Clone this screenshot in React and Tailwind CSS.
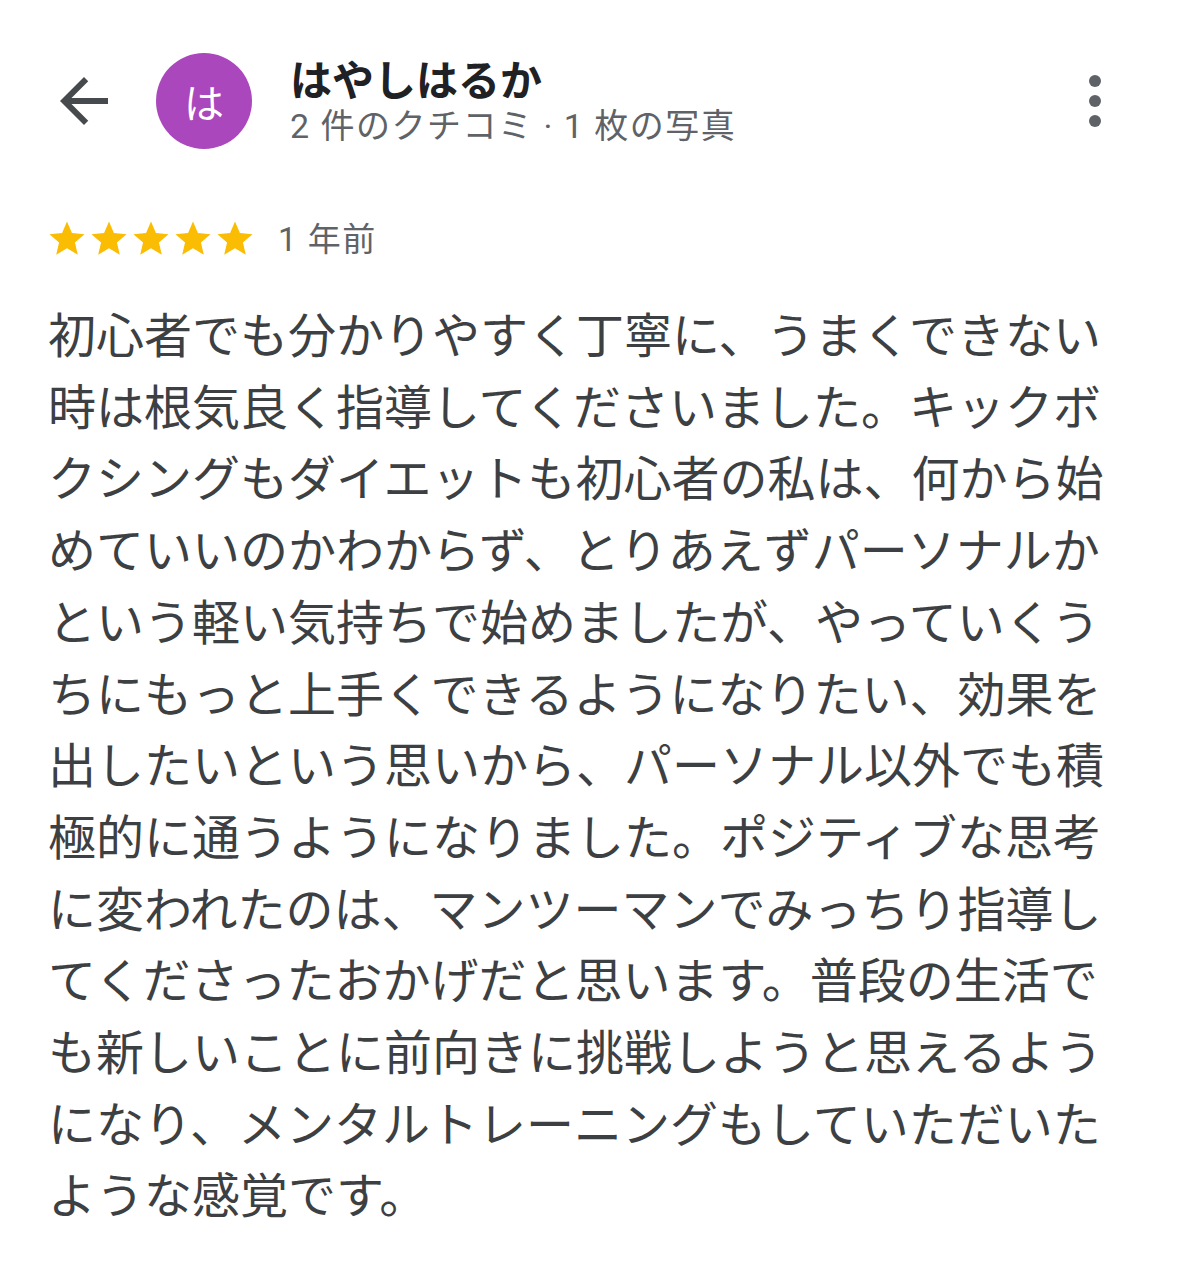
import React from "react";

const lines = [
  "初心者でも分かりやすく丁寧に、うまくできない",
  "時は根気良く指導してくださいました。キックボ",
  "クシングもダイエットも初心者の私は、何から始",
  "めていいのかわからず、とりあえずパーソナルか",
  "という軽い気持ちで始めましたが、やっていくう",
  "ちにもっと上手くできるようになりたい、効果を",
  "出したいという思いから、パーソナル以外でも積",
  "極的に通うようになりました。ポジティブな思考",
  "に変われたのは、マンツーマンでみっちり指導し",
  "てくださったおかげだと思います。普段の生活で",
  "も新しいことに前向きに挑戦しようと思えるよう",
  "になり、メンタルトレーニングもしていただいた",
  "ような感覚です。",
];

const Star = () => (
  <svg viewBox="0 0 24 24" className="w-[42px] h-[42px]">
    <path
      fill="#fbbc04"
      d="M12 17.27L18.18 21l-1.64-7.03L22 9.24l-7.19-.61L12 2 9.19 8.63 2 9.24l5.46 4.73L5.82 21z"
    />
  </svg>
);

const App = () => {
  return (
    <div className="w-[1179px] h-[1284px] bg-white font-['Roboto','Noto_Sans_CJK_JP',sans-serif]">
      {/* Header */}
      <div className="flex items-center pt-[53px] pl-[48px] pr-[78px]">
        <svg viewBox="0 0 24 24" className="w-[72px] h-[72px]">
          <path
            fill="#464a4d"
            d="M20 11H7.83l5.59-5.59L12 4l-8 8 8 8 1.41-1.41L7.83 13H20v-2z"
          />
        </svg>
        <div className="ml-[36px] w-[96px] h-[96px] rounded-full bg-[#ab47bc] flex items-center justify-center text-white text-[40px] leading-none font-['Noto_Sans_CJK_JP',sans-serif]">
          は
        </div>
        <div className="ml-[38px] flex flex-col">
          <div className="text-[42px] leading-[48px] font-bold text-[#202124] font-['Noto_Sans_CJK_JP',sans-serif]">
            はやしはるか
          </div>
          <div className="text-[34px] leading-[44px] tracking-[1.5px] text-[#5f6368] mt-[2px]">
            2 件のクチコミ · 1 枚の写真
          </div>
        </div>
        <div className="ml-auto flex flex-col gap-[8px] items-center">
          <span className="w-[12px] h-[12px] rounded-full bg-[#5f6368]"></span>
          <span className="w-[12px] h-[12px] rounded-full bg-[#5f6368]"></span>
          <span className="w-[12px] h-[12px] rounded-full bg-[#5f6368]"></span>
        </div>
      </div>

      {/* Rating */}
      <div className="flex items-center pl-[46px] mt-[69px]">
        <div className="flex">
          <Star />
          <Star />
          <Star />
          <Star />
          <Star />
        </div>
        <span className="ml-[22px] text-[33px] tracking-[1.5px] leading-none text-[#5f6368]">
          1 年前
        </span>
      </div>

      {/* Review body */}
      <div className="pl-[48px] mt-[37px] text-[48px] leading-[71.7px] text-[#3c4043] font-['Noto_Sans_CJK_JP',sans-serif]">
        {lines.map((l, i) => (
          <div key={i} className="whitespace-nowrap">
            {l}
          </div>
        ))}
      </div>
    </div>
  );
};

export default App;
